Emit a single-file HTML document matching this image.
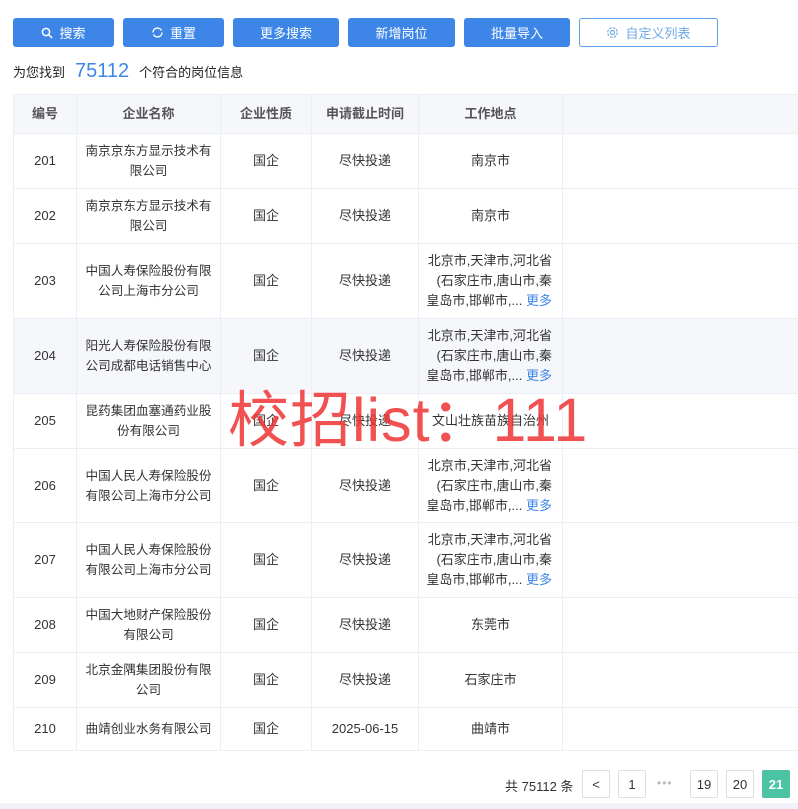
<!DOCTYPE html><html><head><meta charset="utf-8"><style>
*{margin:0;padding:0;box-sizing:border-box}
body{width:798px;height:809px;background:#fff;font-family:"Liberation Sans","Noto Sans CJK SC",sans-serif;color:#333;font-size:13px;position:relative;overflow:hidden}
.btn{position:absolute;top:18px;height:29px;background:#3d86e8;color:#fff;border-radius:3px;font-size:13px;display:flex;align-items:center;justify-content:center;gap:6px}
.btn.o{background:#fff;border:1px solid #5aa0ea;color:#6fa8e6}
.info{position:absolute;top:60px;left:13px;font-size:13px;color:#222;display:flex;align-items:center}
.info b{font-weight:normal;color:#3d86e8;font-size:20px;margin:0 10px}
table{position:absolute;top:94px;left:13px;border-collapse:collapse;table-layout:fixed;width:800px}
td,th{border:1px solid #ebeef5;text-align:center;vertical-align:middle;font-size:13px;line-height:20px;color:#333;font-weight:normal}
th{background:#f5f7fa;height:39px;color:#555;font-weight:bold}
td.n{padding:0 3px;font-size:12.6px;word-break:break-all}
.loc{text-align:right;padding-right:10px}
.more{color:#3d86e8}
tr.h td{background:#f5f7fa}
.wm{position:absolute;left:228px;top:370px;font-size:61px;color:rgba(238,50,50,0.85);white-space:nowrap;letter-spacing:1px}
.pg{position:absolute;top:770px;height:28px;border:1px solid #dcdfe6;border-radius:2px;display:flex;align-items:center;justify-content:center;font-size:13px;color:#333;background:#fff}
</style></head><body>
<div class="btn" style="left:13px;width:101px"><svg width="12" height="12" viewBox="0 0 12 12"><circle cx="5" cy="5" r="3.6" fill="none" stroke="#fff" stroke-width="1.5"/><path d="M7.7 7.7L11 11" stroke="#fff" stroke-width="1.5"/></svg>搜索</div>
<div class="btn" style="left:123px;width:101px"><svg width="13" height="13" viewBox="0 0 13 13"><path d="M2 6.5A4.5 4.5 0 0 1 10.5 4.5M11 6.5A4.5 4.5 0 0 1 2.5 8.5" fill="none" stroke="#fff" stroke-width="1.4"/></svg>重置</div>
<div class="btn" style="left:233px;width:106px">更多搜索</div>
<div class="btn" style="left:348px;width:107px">新增岗位</div>
<div class="btn" style="left:464px;width:106px">批量导入</div>
<div class="btn o" style="left:579px;width:139px"><svg width="13" height="13" viewBox="0 0 13 13"><circle cx="6.5" cy="6.5" r="2" fill="none" stroke="#6fa8e6" stroke-width="1.2"/><circle cx="6.5" cy="6.5" r="4.8" fill="none" stroke="#6fa8e6" stroke-width="1.2" stroke-dasharray="2.5 1.3"/></svg>自定义列表</div>
<div class="info">为您找到<b>75112</b>个符合的岗位信息</div>
<table>
<colgroup><col style="width:63px"><col style="width:144px"><col style="width:91px"><col style="width:107px"><col style="width:144px"><col></colgroup>
<tr><th>编号</th><th>企业名称</th><th>企业性质</th><th>申请截止时间</th><th>工作地点</th><th></th></tr>
<tr style="height:55px"><td>201</td><td class="n">南京京东方显示技术有<br>限公司</td><td>国企</td><td>尽快投递</td><td>南京市</td><td></td></tr>
<tr style="height:55px"><td>202</td><td class="n">南京京东方显示技术有<br>限公司</td><td>国企</td><td>尽快投递</td><td>南京市</td><td></td></tr>
<tr style="height:75px"><td>203</td><td class="n">中国人寿保险股份有限<br>公司上海市分公司</td><td>国企</td><td>尽快投递</td><td class="loc">北京市,天津市,河北省<br>(石家庄市,唐山市,秦<br>皇岛市,邯郸市,... <span class="more">更多</span></td><td></td></tr>
<tr class="h" style="height:75px"><td>204</td><td class="n">阳光人寿保险股份有限<br>公司成都电话销售中心</td><td>国企</td><td>尽快投递</td><td class="loc">北京市,天津市,河北省<br>(石家庄市,唐山市,秦<br>皇岛市,邯郸市,... <span class="more">更多</span></td><td></td></tr>
<tr style="height:55px"><td>205</td><td class="n">昆药集团血塞通药业股<br>份有限公司</td><td>国企</td><td>尽快投递</td><td>文山壮族苗族自治州</td><td></td></tr>
<tr style="height:74px"><td>206</td><td class="n">中国人民人寿保险股份<br>有限公司上海市分公司</td><td>国企</td><td>尽快投递</td><td class="loc">北京市,天津市,河北省<br>(石家庄市,唐山市,秦<br>皇岛市,邯郸市,... <span class="more">更多</span></td><td></td></tr>
<tr style="height:75px"><td>207</td><td class="n">中国人民人寿保险股份<br>有限公司上海市分公司</td><td>国企</td><td>尽快投递</td><td class="loc">北京市,天津市,河北省<br>(石家庄市,唐山市,秦<br>皇岛市,邯郸市,... <span class="more">更多</span></td><td></td></tr>
<tr style="height:55px"><td>208</td><td class="n">中国大地财产保险股份<br>有限公司</td><td>国企</td><td>尽快投递</td><td>东莞市</td><td></td></tr>
<tr style="height:55px"><td>209</td><td class="n">北京金隅集团股份有限<br>公司</td><td>国企</td><td>尽快投递</td><td>石家庄市</td><td></td></tr>
<tr style="height:43px"><td>210</td><td class="n">曲靖创业水务有限公司</td><td>国企</td><td>2025-06-15</td><td>曲靖市</td><td></td></tr>
</table>
<div class="wm">校招list：111</div>
<div style="position:absolute;top:776px;left:505px;font-size:13px;color:#333">共 75112 条</div>
<div class="pg" style="left:582px;width:28px">&lt;</div>
<div class="pg" style="left:618px;width:28px">1</div>
<div style="position:absolute;left:657px;top:776px;color:#bbb;font-size:12px;letter-spacing:1px">•••</div>
<div class="pg" style="left:690px;width:28px">19</div>
<div class="pg" style="left:726px;width:28px">20</div>
<div class="pg" style="left:762px;width:28px;background:#4cc3a3;border-color:#4cc3a3;color:#fff;font-weight:bold">21</div>
<div style="position:absolute;left:0;top:803px;width:798px;height:6px;background:#f0f2f7"></div>
</body></html>
